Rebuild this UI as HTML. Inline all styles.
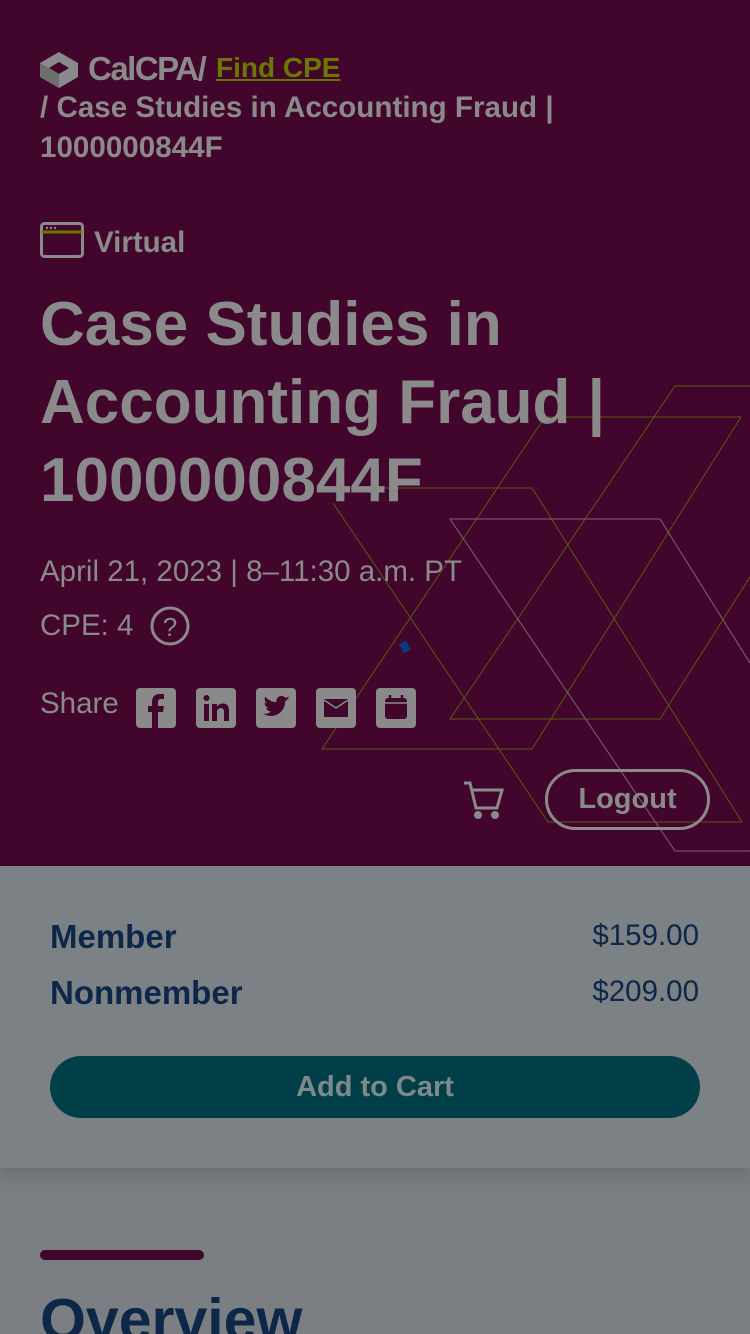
<!DOCTYPE html>
<html><head><meta charset="utf-8"><style>
*{margin:0;padding:0;box-sizing:border-box}
html{width:750px;height:1334px;overflow:hidden}
body{width:750px;height:1334px;overflow:hidden;background:#7b7e82;font-family:"Liberation Sans",sans-serif;position:relative}
.hero{position:absolute;left:0;top:0;width:750px;height:866px;background:#42052b;overflow:hidden}
.t{position:absolute;color:#8a8a8a;white-space:nowrap}
.b{font-weight:bold}
.ic{position:absolute;top:688px;width:40px;height:40px;background:#8a8a8a;border-radius:4px}
.price{position:absolute;left:0;top:866px;width:750px;height:302px;background:#7c8186;box-shadow:0 8px 20px rgba(0,0,0,.15)}
.n{position:absolute;color:#0d2748;white-space:nowrap}
</style></head><body>
<div class="hero">
<svg width="750" height="866" style="position:absolute;left:0;top:0" fill="none" stroke-width="1">
<g stroke="#5c5812">
<path d="M333 488H532L742 822H548L333 503"/>
<path d="M322 749H532L741 417H545L322 749"/>
<path d="M750 386H675L450 719H660L750 577"/>
</g>
<g stroke="#7e6278">
<path d="M675 851L450 519H660L750 663"/>
<path d="M675 851H750"/>
</g>
<rect x="401" y="642" width="8" height="10" fill="#0a3a7a" transform="rotate(-30 405 647)"/>
</svg>
<svg style="position:absolute;left:40px;top:52px" width="38" height="36" viewBox="0 0 38 36"><path d="M19 0L38 11V25L19 36L0 25V11Z" fill="#8a8a8a"/><path d="M19 10L29 16L19 22L9 16Z" fill="#42052b"/><path d="M0 11L19 22V36L0 25Z" fill="#6e6e6e"/></svg>
<div class="t b" style="left:88px;top:50px;font-size:33px;letter-spacing:-1.5px">CalCPA/</div>
<div class="t b" style="left:216px;top:52px;font-size:28px;color:#6b7800;text-decoration:underline">Find CPE</div>
<div class="t b" style="left:40px;top:91px;font-size:29.6px">/ Case Studies in Accounting Fraud |</div>
<div class="t b" style="left:40px;top:131px;font-size:29.6px">1000000844F</div>
<svg style="position:absolute;left:40px;top:222px" width="44" height="36"><rect x="1.5" y="1.5" width="41" height="33" rx="3" stroke="#8a8a8a" stroke-width="3" fill="none"/><path d="M2 10H42" stroke="#6b7800" stroke-width="3"/><circle cx="7" cy="6" r="1.2" fill="#8a8a8a"/><circle cx="11" cy="6" r="1.2" fill="#8a8a8a"/><circle cx="15" cy="6" r="1.2" fill="#8a8a8a"/></svg>
<div class="t b" style="left:94px;top:226px;font-size:29.5px">Virtual</div>
<div class="t b" style="left:40px;top:286px;font-size:62px;line-height:78px">Case Studies in<br>Accounting Fraud |<br>1000000844F</div>
<div class="t" style="left:40px;top:555px;font-size:29.5px">April 21, 2023 | 8–11:30 a.m. PT</div>
<div class="t" style="left:40px;top:609px;font-size:29.5px">CPE: 4</div>
<svg style="position:absolute;left:150px;top:606px" width="40" height="40"><circle cx="20" cy="20" r="18" stroke="#8a8a8a" stroke-width="3" fill="none"/><text x="20" y="30" font-size="26" text-anchor="middle" fill="#8a8a8a" font-family="Liberation Sans">?</text></svg>
<div class="t" style="left:40px;top:687px;font-size:29.5px">Share</div>
<div class="ic" style="left:136px"><svg width="40" height="40"><path d="M22 40V24H27L28 18H22V14C22 12 23 11 25 11H28V6H24C19 6 16 9 16 14V18H12V24H16V40Z" fill="#42052b"/></svg></div>
<div class="ic" style="left:196px"><svg width="40" height="40"><rect x="8" y="16" width="5" height="17" fill="#42052b"/><circle cx="10.5" cy="10" r="3" fill="#42052b"/><path d="M16 16H21V19C22 17 24 15.5 27 15.5C31 15.5 33 18 33 23V33H28V24C28 21.5 27 20 25 20C22.5 20 21 22 21 24V33H16Z" fill="#42052b"/></svg></div>
<div class="ic" style="left:256px"><svg width="40" height="40"><path d="M34 11C33 11.5 31.5 12 30.5 12C31.5 11 32.5 10 33 8.5C32 9 30.5 9.6 29.5 9.8C28.5 8.8 27 8 25.5 8C22 8 19.8 11 20.5 14.2C16 14 12 11.8 9.3 8.6C8 11 8.8 14 11 15.5C10 15.5 9.2 15.2 8.5 14.8C8.5 17.3 10.3 19.4 12.6 19.9C11.8 20.1 11 20.2 10.2 20C10.8 22 12.8 23.5 15 23.6C12.8 25.3 10 26.1 7 25.8C9.3 27.2 12 28 14.8 28C24 28 29.4 20.3 29.1 13.4C30.3 12.6 31.2 11.8 34 11Z" fill="#42052b"/></svg></div>
<div class="ic" style="left:316px"><svg width="40" height="40"><rect x="8" y="11" width="24" height="18" fill="#42052b"/><path d="M8 12L20 20L32 12" stroke="#8a8a8a" stroke-width="1.5" fill="none"/></svg></div>
<div class="ic" style="left:376px"><svg width="40" height="40"><rect x="9" y="10" width="22" height="21" rx="3" fill="#42052b"/><path d="M14 7V12M26 7V12" stroke="#42052b" stroke-width="2.5"/><path d="M9 15H31" stroke="#8a8a8a" stroke-width="1.5"/></svg></div>
<svg style="position:absolute;left:463px;top:780px" width="42" height="40" fill="none" stroke="#8a8a8a" stroke-width="3"><path d="M1 3H7L13 28H34L39 10H10"/><circle cx="15" cy="35" r="2.5" fill="#8a8a8a"/><circle cx="32" cy="35" r="2.5" fill="#8a8a8a"/></svg>
<div style="position:absolute;left:545px;top:769px;width:165px;height:61px;border:3px solid #8a8a8a;border-radius:31px;color:#8a8a8a;font-weight:bold;font-size:29px;text-align:center;line-height:55px">Logout</div>
</div>
<div class="price">
<div class="n b" style="left:50px;top:52px;font-size:33px">Member</div>
<div class="n" style="right:51px;top:53px;font-size:29.5px">$159.00</div>
<div class="n b" style="left:50px;top:108px;font-size:33px">Nonmember</div>
<div class="n" style="right:51px;top:109px;font-size:29.5px">$209.00</div>
<div style="position:absolute;left:50px;top:190px;width:650px;height:62px;background:#003f47;border-radius:31px;color:#7d8a8c;font-weight:bold;font-size:29px;text-align:center;line-height:62px">Add to Cart</div>
</div>
<div style="position:absolute;left:40px;top:1250px;width:164px;height:10px;background:#42052b;border-radius:5px"></div>
<div class="n b" style="left:40px;top:1286px;font-size:59px">Overview</div>
</body></html>
